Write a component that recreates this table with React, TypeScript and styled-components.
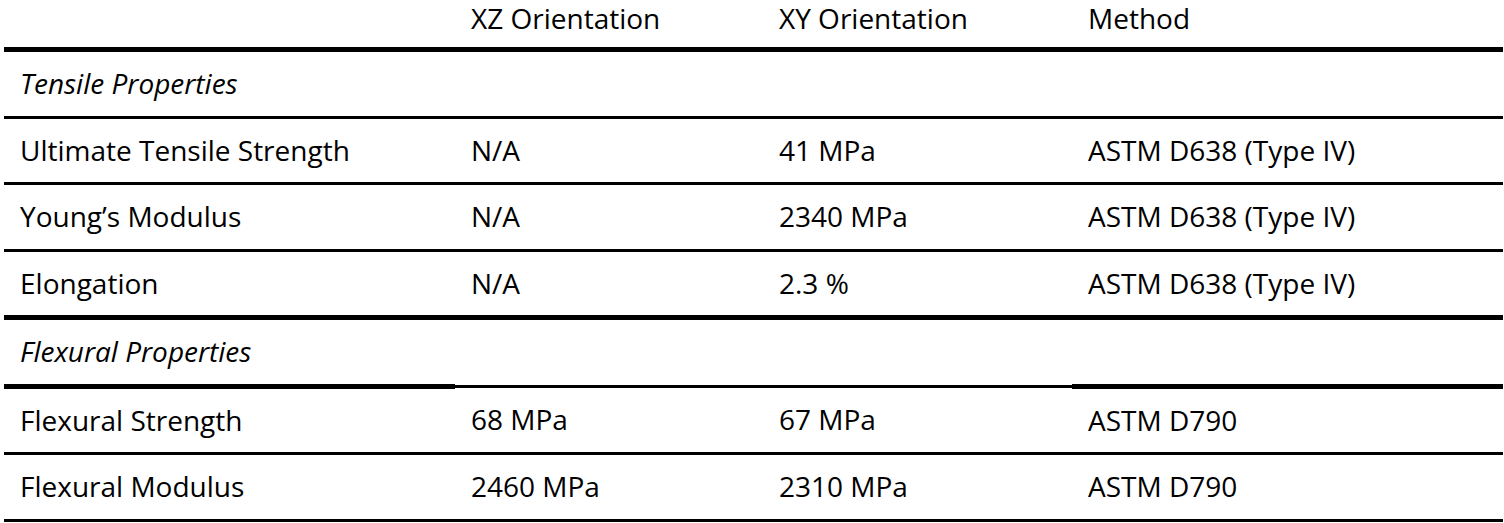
import React from "react";
import styled, { createGlobalStyle } from "styled-components";

const GlobalStyle = createGlobalStyle`
  html, body {
    margin: 0;
    padding: 0;
    background: #ffffff;
  }
  body {
    font-family: "Open Sans", "Lato", "Liberation Sans", sans-serif;
    color: #000000;
  }
`;

const Page = styled.div`
  width: 1504px;
  height: 523px;
  padding-left: 4px;
  box-sizing: border-box;
  overflow: hidden;
`;

const Table = styled.table`
  width: 1499px;
  border-collapse: collapse;
  table-layout: fixed;
  font-size: 28px;
  line-height: 1.25;
`;

const Col = styled.col<{ $w: number }>`
  width: ${(p) => p.$w}px;
`;

const HeadCell = styled.th`
  font-weight: 400;
  text-align: left;
  padding: 0 0 11px 16px;
  height: 36px;
  vertical-align: middle;
  white-space: nowrap;
  border-bottom: 5px solid #000;
`;

const Cell = styled.td<{ $line: number; $italic?: boolean }>`
  padding: 0 0 0 16px;
  height: 63.5px;
  vertical-align: middle;
  white-space: nowrap;
  font-style: ${(p) => (p.$italic ? "italic" : "normal")};
  border-bottom: ${(p) => p.$line}px solid #000;
`;

type Row = {
  cells: string[];
  section?: boolean;
  line: number;
  midLine?: number;
};

const widths = [451, 308, 309, 431];

const rows: Row[] = [
  { cells: ["Tensile Properties", "", "", ""], section: true, line: 3 },
  { cells: ["Ultimate Tensile Strength", "N/A", "41 MPa", "ASTM D638 (Type IV)"], line: 3 },
  { cells: ["Young\u2019s Modulus", "N/A", "2340 MPa", "ASTM D638 (Type IV)"], line: 3 },
  { cells: ["Elongation", "N/A", "2.3 %", "ASTM D638 (Type IV)"], line: 5 },
  { cells: ["Flexural Properties", "", "", ""], section: true, line: 5, midLine: 3 },
  { cells: ["Flexural Strength", "68 MPa", "67 MPa", "ASTM D790"], line: 3 },
  { cells: ["Flexural Modulus", "2460 MPa", "2310 MPa", "ASTM D790"], line: 3 },
];

const App = () => {
  return (
    <Page>
      <GlobalStyle />
      <Table>
        <colgroup>
          {widths.map((w, i) => (
            <Col key={i} $w={w} />
          ))}
        </colgroup>
        <thead>
          <tr>
            <HeadCell></HeadCell>
            <HeadCell>XZ Orientation</HeadCell>
            <HeadCell>XY Orientation</HeadCell>
            <HeadCell>Method</HeadCell>
          </tr>
        </thead>
        <tbody>
          {rows.map((row, i) => (
            <tr key={i}>
              {row.cells.map((c, j) => (
                <Cell
                  key={j}
                  $italic={row.section && j === 0}
                  $line={row.midLine && (j === 1 || j === 2) ? row.midLine : row.line}
                >
                  {c}
                </Cell>
              ))}
            </tr>
          ))}
        </tbody>
      </Table>
    </Page>
  );
};

export default App;
